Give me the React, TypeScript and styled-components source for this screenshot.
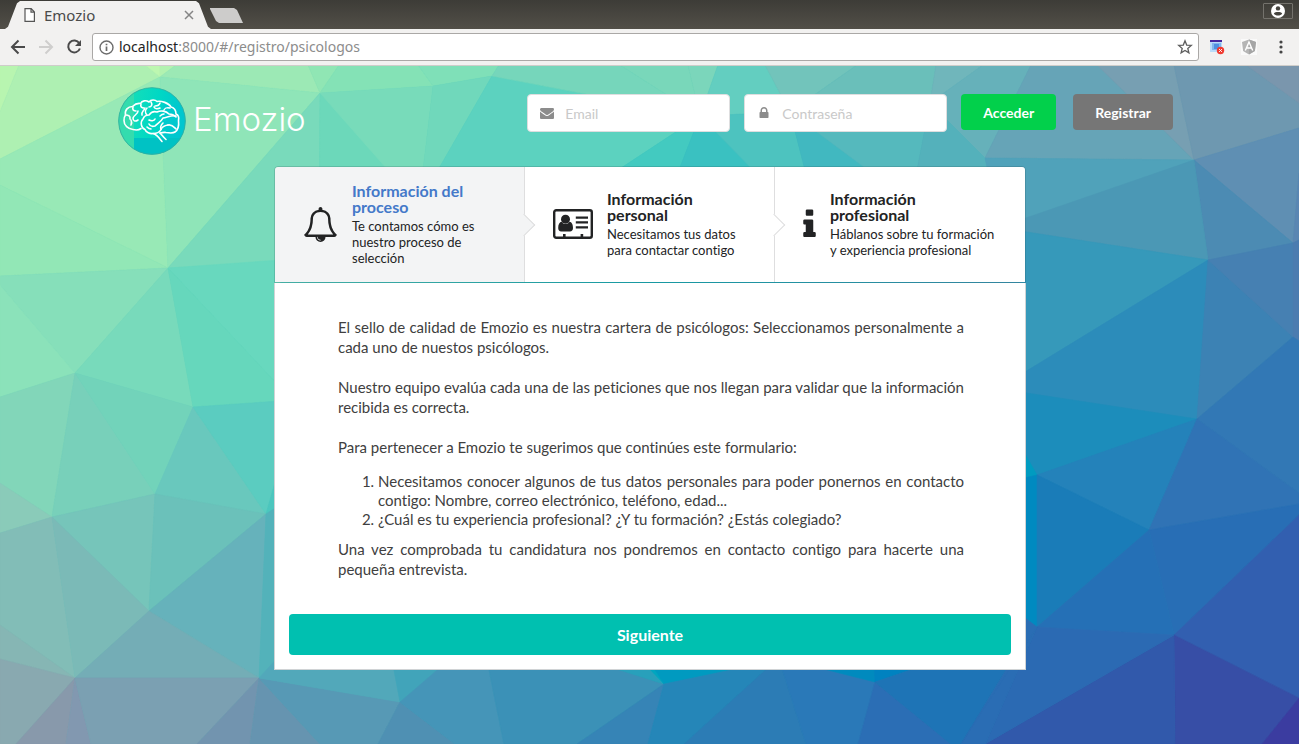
import React from "react";
import styled, { createGlobalStyle } from "styled-components";

const GlobalStyle = createGlobalStyle`
  *, *::before, *::after { box-sizing: border-box; }
  body {
    margin: 0;
    font-family: Lato, "Liberation Sans", sans-serif;
    font-size: 14px;
    font-variant-ligatures: none;
  }
  button, input { font-family: inherit; }
`;

const Window = styled.div`
  display: flex;
  flex-direction: column;
  min-height: 100vh;
`;

/* ---------- Browser chrome ---------- */

const TabStrip = styled.div`
  display: flex;
  align-items: flex-start;
  height: 29px;
  padding: 0 6px 0 5px;
  background: linear-gradient(#3d3c37, #524f48);
`;

const Tab = styled.div`
  display: flex;
  align-items: center;
  width: 206px;
  height: 28px;
  margin-top: 1px;
  padding: 0 17px 0 19px;
  background: #f2f1f0;
  clip-path: polygon(0 100%, 3px 92%, 12px 8%, 15px 0, 191px 0, 194px 8%, 203px 92%, 100% 100%);
`;

const TabTitle = styled.span`
  flex: 1;
  margin-left: 8px;
  font: 15px/20px "Noto Sans", sans-serif;
  color: #4a4a4a;
`;

const ChromeButton = styled.button`
  display: flex;
  align-items: center;
  justify-content: center;
  padding: 0;
  border: 0;
  background: none;
`;

const NewTab = styled.button`
  width: 33px;
  height: 15px;
  margin: 8px auto 0 -1px;
  padding: 0;
  border: 0;
  background: #cdcccb;
  clip-path: polygon(0 0, 24px 0, 27px 2px, 100% 100%, 9px 100%, 6px 13px, 0 1px);
`;

const UserButton = styled(ChromeButton)`
  width: 30px;
  height: 16px;
  margin-top: 3px;
  border: 1px solid #74726c;
  border-radius: 1px;
`;

const Toolbar = styled.div`
  display: flex;
  align-items: center;
  height: 37px;
  padding: 0 10px 0 9px;
  background: #f2f1f0;
  border-bottom: 1px solid #cfcdca;
`;

const NavButtons = styled.div`
  display: flex;
  gap: 10px;
  margin-right: 9px;
`;

const AddressBar = styled.div`
  display: flex;
  flex: 1;
  align-items: center;
  height: 28px;
  padding: 0 5px 0 6px;
  background: #fff;
  border: 1px solid #aaa8a6;
  border-radius: 3px;
`;

const Url = styled.span`
  flex: 1;
  margin-left: 5px;
  font: 14px/20px "Noto Sans", sans-serif;
  color: #8c8c8c;
`;

const Host = styled.span`
  color: #222;
`;

const Extensions = styled.div`
  display: flex;
  align-items: center;
  gap: 16px;
  margin-left: 10px;
`;

/* ---------- Page ---------- */

const Page = styled.main`
  position: relative;
  flex: 1;
  padding: 21px 16px 74px 17px;
  overflow: hidden;
`;

const Backdrop = styled.svg`
  position: absolute;
  inset: 0;
  width: 100%;
  height: 100%;
`;

const Header = styled.header`
  position: relative;
  display: flex;
  align-items: flex-start;
  justify-content: space-between;
  max-width: 1128px;
  margin: 0 auto;
  padding: 0 41px 0 32px;
`;

const Brand = styled.a`
  display: flex;
  align-items: center;
  gap: 7px;
  height: 68px;
  color: #fff;
  font: 300 33px/40px Inter, Lato, sans-serif;
  text-decoration: none;
`;

const BrandName = styled.span`
  padding-bottom: 4px;
`;

const LoginForm = styled.form`
  display: flex;
  align-items: flex-start;
  gap: 14px;
  margin-top: 7px;
`;

const Field = styled.label`
  display: flex;
  align-items: center;
  width: 203px;
  height: 38px;
  padding-left: 12px;
  background: #fff;
  border: 1px solid #dededf;
  border-radius: 4px;
`;

const FieldIcon = styled.svg`
  flex: none;
  width: 14px;
  height: 14px;
  fill: #8c8c8c;
`;

const FieldInput = styled.input`
  flex: 1;
  min-width: 0;
  height: 36px;
  padding: 0 14px 0 11px;
  border: 0;
  outline: 0;
  background: none;
  font-size: 14px;
  &::placeholder { color: #c9c9c9; }
`;

const Button = styled.button<{ $color: string }>`
  height: 36px;
  padding: 0 22px;
  border: 0;
  border-radius: 4px;
  background: ${(p) => p.$color};
  color: #fff;
  font-size: 14px;
  font-weight: 700;
`;

const Actions = styled.div`
  display: flex;
  gap: 17px;
`;

const Wizard = styled.section`
  position: relative;
  max-width: 752px;
  margin: 11px auto 0;
`;

const Steps = styled.ol`
  display: grid;
  grid-template-columns: repeat(3, 1fr);
  margin: 0;
  padding: 0;
  list-style: none;
  border: 1px solid rgba(34, 60, 66, 0.18);
  border-radius: 4px 4px 0 0;
`;

const Step = styled.li<{ $active?: boolean }>`
  position: relative;
  display: flex;
  align-items: center;
  gap: 14px;
  min-width: 0;
  padding: 16px 28px;
  background: ${(p) => (p.$active ? "#f3f4f5" : "#fff")};
  color: #222324;
  &:first-child { border-top-left-radius: 3px; }
  &:last-child { border-top-right-radius: 3px; }
  &:not(:last-child) { border-right: 1px solid #dededf; }
  &:not(:last-child)::after {
    content: "";
    position: absolute;
    z-index: 1;
    top: 50%;
    right: 0;
    width: 16px;
    height: 16px;
    background: ${(p) => (p.$active ? "#f3f4f5" : "#fff")};
    border: solid #dededf;
    border-width: 0 1px 1px 0;
    transform: translate(50%, -50%) rotate(-45deg);
  }
`;

const StepIcon = styled.svg<{ $width: number }>`
  flex: none;
  width: ${(p) => p.$width}px;
  height: 35px;
  fill: #222324;
`;

const StepTitle = styled.div<{ $active?: boolean }>`
  font-size: 16px;
  font-weight: 700;
  line-height: 16px;
  color: ${(p) => (p.$active ? "#4479c9" : "#222324")};
`;

const StepText = styled.div`
  margin-top: 3px;
  font-size: 13px;
  line-height: 16px;
`;

const Segment = styled.div`
  padding: 34px 14px 14px;
  background: #fff;
  border: 1px solid #d0d3d5;
  border-top: 0;
`;

const Copy = styled.div`
  padding: 0 47px 0 49px;
  color: #404040;
  font-size: 15px;
  line-height: 20px;
  text-align: justify;
`;

const Paragraph = styled.p`
  margin: 0 0 20px;
`;

const LastParagraph = styled(Paragraph)`
  margin-bottom: 35px;
`;

const NumberedList = styled.ol`
  margin: -5px 0 10px;
  padding-left: 40px;
  line-height: 19px;
`;

const NextButton = styled.button`
  display: block;
  width: 100%;
  height: 41px;
  padding: 0;
  border: 0;
  border-radius: 4px;
  background: #00c0b0;
  color: #fff;
  font-size: 16px;
  font-weight: 700;
`;

/* Facets of the low-poly backdrop: colour, then its corner points. */
const facets: [string, string][] = [
  ["#b8f5b0", "0,65 19,65 0,112"],
  ["#aef0b2", "19,65 145,65 160,77 0,159 0,112"],
  ["#bdf7b0", "145,65 160,65 160,77"],
  ["#b2f2b0", "160,65 176,65 160,77"],
  ["#9ce9b5", "176,65 308,65 320,93 160,77"],
  ["#90e6b4", "308,65 339,65 320,93"],
  ["#84e2b6", "339,65 418,65 433,86 320,93"],
  ["#7fe0b8", "418,65 499,65 492,76 433,86"],
  ["#98e9b6", "0,159 160,77 168,268 0,185"],
  ["#92e7b6", "0,185 168,268 0,276"],
  ["#8fe5b8", "160,77 320,93 168,268"],
  ["#79dabb", "320,93 319,260 168,268"],
  ["#6cd8ba", "320,93 480,260 319,260"],
  ["#78dbba", "320,93 433,86 423,170 388,170"],
  ["#70d8bb", "433,86 492,76 438,170 423,170"],
  ["#5cd2bf", "492,76 700,116 618,170 438,170"],
  ["#76d6bb", "492,76 499,65 620,65 700,116"],
  ["#79d7ba", "620,65 688,65 700,116"],
  ["#7bd6bb", "688,65 718,65 700,116"],
  ["#63cec0", "718,65 765,65 790,112 700,116"],
  ["#72c4bb", "765,65 857,65 790,112"],
  ["#6abfba", "857,65 936,65 930,103 790,112"],
  ["#70b6bb", "936,65 983,65 930,103"],
  ["#66b1ba", "983,65 1031,65 985,158 930,103"],
  ["#66a4b7", "1031,65 1097,65 1194,160 985,158"],
  ["#779fb2", "1097,65 1174,65 1194,160"],
  ["#6e98b0", "1174,65 1246,65 1299,103 1299,128 1194,160"],
  ["#7a96ad", "1246,65 1299,65 1299,103"],
  ["#43cac0", "700,116 679,170 618,170"],
  ["#3ac1c1", "700,116 753,170 679,170"],
  ["#4dc3bf", "700,116 790,112 805,170 753,170"],
  ["#41b8c0", "790,112 868,170 805,170"],
  ["#55b9bd", "790,112 930,103 917,170 868,170"],
  ["#54b1bb", "930,103 985,158 988,170 917,170"],
  ["#5f8fb3", "1194,160 1299,128 1299,173 1293,243"],
  ["#5a86b2", "1299,173 1299,240 1293,243"],
  ["#4c8bb3", "1194,160 1293,243 1208,260"],
  ["#50a2ba", "985,158 1194,160 1000,230"],
  ["#4b98b5", "1194,160 1208,260 1020,231 1020,220"],
  ["#3699ba", "1208,260 1020,231 1020,375"],
  ["#2c8cba", "1208,260 1020,375 1020,392 1197,419"],
  ["#3c82b4", "1208,260 1293,337 1197,419"],
  ["#4680b2", "1208,260 1293,243 1293,337"],
  ["#4b7cb0", "1293,243 1299,240 1299,341 1293,337"],
  ["#3278b5", "1293,337 1299,341 1299,493 1197,419"],
  ["#1c8dbb", "1197,419 1020,392 1020,445 1037,475"],
  ["#009bc0", "1020,445 1037,475 1020,479"],
  ["#008ac0", "1037,475 1037,627 1020,614 1020,479"],
  ["#2482ba", "1197,419 1149,530 1037,475"],
  ["#1a7cb8", "1037,475 1149,530 1037,627"],
  ["#3073b5", "1197,419 1299,493 1299,504 1149,530"],
  ["#286eb5", "1149,530 1299,504 1299,515 1174,635"],
  ["#2570b6", "1149,530 1174,635 1037,627"],
  ["#325fb0", "1174,635 1299,515 1299,698"],
  ["#374ea6", "1174,635 1299,698 1262,744 1175,744"],
  ["#3b3ca0", "1299,698 1299,744 1262,744"],
  ["#3159ab", "1174,635 1175,744 985,744"],
  ["#2b6ab3", "1037,627 1174,635 985,744"],
  ["#2a6db4", "1037,627 985,744 959,744"],
  ["#86dfba", "168,268 0,276 0,285 75,373"],
  ["#8be2ba", "0,285 75,373 0,397"],
  ["#78dabb", "168,268 193,407 75,373"],
  ["#68d8be", "168,268 280,260 280,387"],
  ["#66d7bc", "168,268 280,387 280,401 193,407"],
  ["#82d6b9", "75,373 52,517 0,483 0,397"],
  ["#78d0ba", "75,373 155,494 52,517"],
  ["#72d3ba", "75,373 193,407 155,494"],
  ["#69c8bd", "193,407 266,514 155,494"],
  ["#5bccc0", "193,407 280,401 280,465 266,514"],
  ["#4cc6be", "280,465 280,505 266,514"],
  ["#8acbb9", "0,483 52,517 0,533"],
  ["#76c5ba", "52,517 155,494 149,611"],
  ["#6bc1ba", "155,494 266,514 149,611"],
  ["#82bdb7", "52,517 75,678 0,625 0,533"],
  ["#7bbab7", "52,517 149,611 75,678"],
  ["#66b2bb", "266,514 259,678 149,611"],
  ["#53b2ba", "266,514 280,505 280,655 259,678"],
  ["#74adb6", "149,611 259,678 75,678"],
  ["#86b6b4", "0,625 75,678 0,659"],
  ["#89a9b0", "0,659 75,678 16,744 0,744"],
  ["#8899ab", "75,678 66,744 16,744"],
  ["#8298b0", "75,678 91,744 66,744"],
  ["#7ba0b2", "75,678 259,678 197,744 91,744"],
  ["#7294af", "259,678 250,744 197,744"],
  ["#6694b0", "259,678 320,744 250,744"],
  ["#5799b5", "259,678 400,702 378,744 320,744"],
  ["#52a8ba", "259,678 280,655 393,665 400,702"],
  ["#41a4ba", "393,665 443,665 400,702"],
  ["#4f90b3", "400,702 455,744 378,744"],
  ["#4595b8", "400,702 443,665 488,665 504,744 455,744"],
  ["#3b91b7", "488,665 604,665 664,684 577,744 504,744"],
  ["#28a0bb", "604,665 646,665 664,684"],
  ["#00a6c0", "646,665 652,665 664,684"],
  ["#009ac0", "652,665 755,665 664,684"],
  ["#3684b6", "664,684 648,744 577,744"],
  ["#2586b8", "664,684 755,665 771,665 684,744 648,744"],
  ["#2c7cb5", "771,665 781,665 806,744 684,744"],
  ["#2a79b8", "781,665 808,665 875,682 858,744 806,744"],
  ["#008abe", "808,665 874,665 875,682"],
  ["#0082c0", "874,665 925,665 875,682"],
  ["#2b6eb5", "875,682 951,744 858,744"],
  ["#1e74b6", "875,682 925,665 1009,665 961,744 951,744"],
  ["#2a6db4", "1009,665 1020,614 1037,627 961,744"],
];

const LowPolyBackdrop = () => (
  <Backdrop viewBox="0 66 1299 678" preserveAspectRatio="xMidYMid slice" aria-hidden="true">
    <defs>
      <linearGradient id="base" x1="0" y1="0" x2="1" y2="0">
        <stop offset="0.2" stopColor="#50c8ba" />
        <stop offset="0.5" stopColor="#16aeb8" />
        <stop offset="0.8" stopColor="#3a94b4" />
      </linearGradient>
    </defs>
    <rect y="65" width="1299" height="679" fill="url(#base)" />
    {facets.map(([color, points], i) => (
      <polygon key={i} points={points} fill={color} stroke={color} strokeWidth="0.6" />
    ))}
  </Backdrop>
);

const BrainLogo = () => (
  <svg width="68" height="68" viewBox="0 0 68 68" aria-hidden="true">
    <defs>
      <clipPath id="disc"><circle cx="34" cy="34" r="33.5" /></clipPath>
      <linearGradient id="discFill" x1="0" y1="0" x2="1" y2="0.2">
        <stop offset="0" stopColor="#1fe0b4" />
        <stop offset="0.6" stopColor="#00d8c4" />
        <stop offset="1" stopColor="#00c4d0" />
      </linearGradient>
    </defs>
    <g clipPath="url(#disc)">
      <rect width="68" height="68" fill="url(#discFill)" />
      <path d="M0 0h16v68H0z" fill="#34dcae" />
      <path d="M16 51h52v17H16z" fill="#00c2c4" />
      <path d="M45 18h23v33H45z" fill="#00c8ce" opacity="0.7" />
    </g>
    <circle cx="34" cy="34" r="33.3" fill="none" stroke="#3aa99c" strokeWidth="0.8" />
    <g fill="none" stroke="#fff" strokeWidth="1.6" strokeLinecap="round" strokeLinejoin="round">
      <path d="M23 41.500c-2 1.500-6 1.500-8 1-5-.5-9-4-9-9 0-2 .3-4 1.500-5.500C6.500 23 10 19.500 14.500 19.500 17 17 20 16 22.500 16.500 24 13.500 28 13 31 15 33 12.500 37 12.500 39 14.500 43 13.500 51 16 53 20c4 1 5 4 5 7 2.500 1 3 4 2.500 6.500C61 38 60 43 57 45c-2 1.500-6 1-9 .5-2-.5-4 0-6 .5" />
      <path d="M25 32c-3 3-2 9 2 10.500 1 3 5 4.500 8 4 4 0 7-2 8-4 1-3 4-4 7-4.500M25 32c1-3 3-4 6-4 2-3 5-4 8-3 4-2 9-1 12 2 3 0 5 1 7 3M29 28c-2-2-2-5 0-7M31 33c2 1 5 1 6-1" />
      <path d="M58 29c-4-1-8 1-13 2-2 4-5 5-8 8M45 36c-2 2-3 4-2 6.500M37 39c-3 1-5 0-6-2M50 38c4-1 6 2 8 4M46 27c-2 0-3 1-4 2" />
      <path d="M15 20c-1 3 1 4 3 4M20 24c0 3-4 4-5 7 0 3 2 4 5 2M7.500 28c3 0 5 1 4.500 4M13 38c1-2 1-3 0-5M23 17c-1 3 1 4 3 4M27 21c-1 3-4 4-3 7M33 15c2 3 0 5-2 5M42 16c-1 3-4 3-5 3M36 20c1 2 4 2 6 1M52 21c-4-1-5 0-6 2" />
      <path d="M35 46.500c4 1 6 4 9 8M42 46c2 2 3 4 6 6.500M33 42c-2 0-3-1-4-2" />
    </g>
  </svg>
);

export default function App() {
  return (
    <Window>
      <GlobalStyle />
      <TabStrip>
        <Tab>
          <svg width="12" height="14" viewBox="0 0 12 14" fill="#fff" stroke="#555" strokeWidth="1.2" aria-hidden="true">
            <path d="M1 .7h6.200L10.400 4v9.300H1zM7 .7V4.200h3.400" />
          </svg>
          <TabTitle>Emozio</TabTitle>
          <ChromeButton aria-label="Cerrar pestaña">
            <svg width="10" height="10" viewBox="0 0 10 10" stroke="#858585" strokeWidth="1.500">
              <path d="M1 1l8 8M9 1l-8 8" />
            </svg>
          </ChromeButton>
        </Tab>
        <NewTab aria-label="Nueva pestaña" />
        <UserButton aria-label="Usuario">
          <svg width="14" height="14" viewBox="0 0 14 14">
            <circle cx="7" cy="7" r="7" fill="#fff" />
            <circle cx="7" cy="4.400" r="2.200" fill="#45433e" />
            <path d="M2.800 9.600C3.600 8.200 5.200 7.900 7 7.900s3.400.3 4.200 1.700C10.300 11 8.800 11.600 7 11.600S3.700 11 2.800 9.600z" fill="#45433e" />
          </svg>
        </UserButton>
      </TabStrip>
      <Toolbar>
        <NavButtons>
          <ChromeButton aria-label="Atrás">
            <svg width="18" height="18" viewBox="0 0 18 18" fill="none" stroke="#4a4a4a" strokeWidth="2">
              <path d="M16 9H3M9.500 2.500L3 9l6.500 6.500" />
            </svg>
          </ChromeButton>
          <ChromeButton aria-label="Adelante">
            <svg width="18" height="18" viewBox="0 0 18 18" fill="none" stroke="#cfcecd" strokeWidth="2">
              <path d="M2 9h13M8.500 2.500L15 9l-6.500 6.500" />
            </svg>
          </ChromeButton>
          <ChromeButton aria-label="Recargar">
            <svg width="18" height="18" viewBox="0 0 18 18" fill="none" stroke="#4a4a4a" strokeWidth="2">
              <path d="M14.300 5.200A6 6 0 1 0 14.900 10.500" />
              <path d="M16 2v6h-6z" fill="#4a4a4a" stroke="none" />
            </svg>
          </ChromeButton>
        </NavButtons>
        <AddressBar>
          <svg width="15" height="15" viewBox="0 0 15 15" fill="none" stroke="#6c6c6c" strokeWidth="1.400" aria-hidden="true">
            <circle cx="7.500" cy="7.500" r="6.500" />
            <path d="M7.500 6.500v4.500M7.500 3.700v1.600" strokeWidth="1.700" />
          </svg>
          <Url><Host>localhost</Host>:8000/#/registro/psicologos</Url>
          <ChromeButton aria-label="Añadir a marcadores">
            <svg width="16" height="16" viewBox="0 0 16 16" fill="none" stroke="#5e5e5e" strokeWidth="1.300">
              <path d="M8 1.800l1.700 4.300 4.600.3-3.500 3 1.100 4.500L8 11.400l-3.900 2.500 1.100-4.500-3.500-3 4.600-.3z" />
            </svg>
          </ChromeButton>
        </AddressBar>
        <Extensions>
          <ChromeButton aria-label="Extensión">
            <svg width="16" height="16" viewBox="0 0 16 16">
              <path d="M1 2h12v11H1z" fill="#b9dcfa" />
              <path d="M3 4h9v7H3z" fill="#82b5ee" />
              <path d="M5 5h5v5H5z" fill="#4f8fe0" />
              <path d="M1 1h12v2H1z" fill="#4527a0" />
              <circle cx="11.500" cy="11.500" r="3.700" fill="#f03a30" />
              <path d="M10.100 10.100l2.800 2.800M12.900 10.100l-2.800 2.800" stroke="#fff" strokeWidth="1" />
            </svg>
          </ChromeButton>
          <ChromeButton aria-label="Angular">
            <svg width="16" height="16" viewBox="0 0 16 16">
              <path d="M0 0h16v16H0z" fill="#fafafa" />
              <path d="M8 .5l7 2.400-1.100 9.200L8 15.500l-5.900-3.400L1 2.900z" fill="#b5b5b5" />
              <path d="M8 .5l7 2.400-1.100 9.200L8 15.500z" fill="#a5a5a5" />
              <path d="M4.300 11.500L8 3l3.700 8.500M5.800 9h4.400" fill="none" stroke="#fff" strokeWidth="1.400" />
            </svg>
          </ChromeButton>
          <ChromeButton aria-label="Menú">
            <svg width="16" height="16" viewBox="0 0 16 16" fill="#444">
              <circle cx="8" cy="3" r="1.600" />
              <circle cx="8" cy="8" r="1.600" />
              <circle cx="8" cy="13" r="1.600" />
            </svg>
          </ChromeButton>
        </Extensions>
      </Toolbar>

      <Page>
        <LowPolyBackdrop />
        <Header>
          <Brand href="#/">
            <BrainLogo />
            <BrandName>Emozio</BrandName>
          </Brand>
          <LoginForm onSubmit={(e: React.FormEvent) => e.preventDefault()}>
            <Field>
              <FieldIcon viewBox="0 0 1792 1792" aria-hidden="true">
                <path d="M1792 710v794q0 66-47 113t-113 47h-1472q-66 0-113-47t-47-113v-794q44 49 101 87 362 246 497 345 57 42 92.500 65.500t94.500 48 110 24.500h2q51 0 110-24.500t94.500-48 92.500-65.500q170-123 498-345 57-39 100-87zM1792 416q0 79-49 151t-122 123q-376 261-468 325-10 7-42.500 31t-54 38.500-52 32.500-57.500 27-50 9h-2q-23 0-50-9t-57.500-27-52-32.500-54-38.500-42.500-31q-91-64-262-182.500t-205-142.500q-62-42-117-115.500t-55-136.500q0-78 41.500-130t118.500-52h1472q65 0 112.500 47t47.500 113z" />
              </FieldIcon>
              <FieldInput type="email" placeholder="Email" aria-label="Email" />
            </Field>
            <Field>
              <FieldIcon viewBox="0 0 1792 1792" aria-hidden="true">
                <path d="M640 768h512v-192q0-106-75-181t-181-75-181 75-75 181v192zM1472 864v576q0 40-28 68t-68 28h-960q-40 0-68-28t-28-68v-576q0-40 28-68t68-28h32v-192q0-184 132-316t316-132 316 132 132 316v192h32q40 0 68 28t28 68z" />
              </FieldIcon>
              <FieldInput type="password" placeholder="Contraseña" aria-label="Contraseña" />
            </Field>
            <Actions>
              <Button $color="#02d04b" type="submit">Acceder</Button>
              <Button $color="#767676" type="button">Registrar</Button>
            </Actions>
          </LoginForm>
        </Header>

        <Wizard>
          <Steps>
            <Step $active>
              <StepIcon $width={35} viewBox="0 0 1792 1792" aria-hidden="true">
                <path d="M912 1696q0-16-16-16-59 0-101.500-42.500t-42.500-101.500q0-16-16-16t-16 16q0 73 51.500 124.500t124.500 51.500q16 0 16-16zM246 1408h1300q-266-300-266-832 0-51-24-105t-69-103-121.500-80.500-169.500-31.500-169.500 31.500-121.500 80.500-69 103-24 105q0 532-266 832zM1728 1408q0 52-38 90t-90 38h-448q0 106-75 181t-181 75-181-75-75-181h-448q-52 0-90-38t-38-90q50-42 91-88t85-119.500 74.500-158.500 50-206 19.500-260q0-152 117-282.500t307-158.500q-8-19-8-39 0-40 28-68t68-28 68 28 28 68q0 20-8 39 190 28 307 158.500t117 282.500q0 139 19.500 260t50 206 74.500 158.500 85 119.500 91 88z" />
              </StepIcon>
              <div>
                <StepTitle $active>Información del proceso</StepTitle>
                <StepText>Te contamos cómo es nuestro proceso de selección</StepText>
              </div>
            </Step>
            <Step>
              <StepIcon $width={40} viewBox="0 0 40 35" aria-hidden="true">
                <rect x="1.200" y="3.200" width="37.600" height="27.600" rx="2" fill="none" stroke="#222324" strokeWidth="2.400" />
                <circle cx="12.500" cy="12.200" r="4.500" />
                <path d="M8.700 14.800C6.400 15 5.200 17.600 5.200 21c0 2.300 1.200 3.400 3 3.400h8.800c1.800 0 3-1.100 3-3.400 0-3.400-1.200-6-3.500-6.200-1 1.400-2.300 2.300-4 2.300s-2.900-.9-3.800-2.300z" />
                <path d="M22.800 9.500H35v2.200H22.800zM22.800 14.300H35v2.200H22.800zM22.800 19.200H35v2.200H22.800zM10 27h2.600v3H10zM27.600 27h2.600v3h-2.600z" />
              </StepIcon>
              <div>
                <StepTitle>Información personal</StepTitle>
                <StepText>Necesitamos tus datos para contactar contigo</StepText>
              </div>
            </Step>
            <Step>
              <StepIcon $width={13} viewBox="576 0 640 1792" aria-hidden="true">
                <path d="M1216 1344v128q0 26-19 45t-45 19h-512q-26 0-45-19t-19-45v-128q0-26 19-45t45-19h64v-384h-64q-26 0-45-19t-19-45v-128q0-26 19-45t45-19h384q26 0 45 19t19 45v576h64q26 0 45 19t19 45zM1088 192v192q0 26-19 45t-45 19h-256q-26 0-45-19t-19-45v-192q0-26 19-45t45-19h256q26 0 45 19t19 45z" />
              </StepIcon>
              <div>
                <StepTitle>Información profesional</StepTitle>
                <StepText>Háblanos sobre tu formación y experiencia profesional</StepText>
              </div>
            </Step>
          </Steps>
          <Segment>
            <Copy>
              <Paragraph>
                El sello de calidad de Emozio es nuestra cartera de psicólogos: Seleccionamos personalmente a
                cada uno de nuestos psicólogos.
              </Paragraph>
              <Paragraph>
                Nuestro equipo evalúa cada una de las peticiones que nos llegan para validar que la información
                recibida es correcta.
              </Paragraph>
              <Paragraph>
                Para pertenecer a Emozio te sugerimos que continúes este formulario:
              </Paragraph>
              <NumberedList>
                <li>
                  Necesitamos conocer algunos de tus datos personales para poder ponernos en contacto
                  contigo: Nombre, correo electrónico, teléfono, edad...
                </li>
                <li>¿Cuál es tu experiencia profesional? ¿Y tu formación? ¿Estás colegiado?</li>
              </NumberedList>
              <LastParagraph>
                Una vez comprobada tu candidatura nos pondremos en contacto contigo para hacerte una
                pequeña entrevista.
              </LastParagraph>
            </Copy>
            <NextButton type="button">Siguiente</NextButton>
          </Segment>
        </Wizard>
      </Page>
    </Window>
  );
}
